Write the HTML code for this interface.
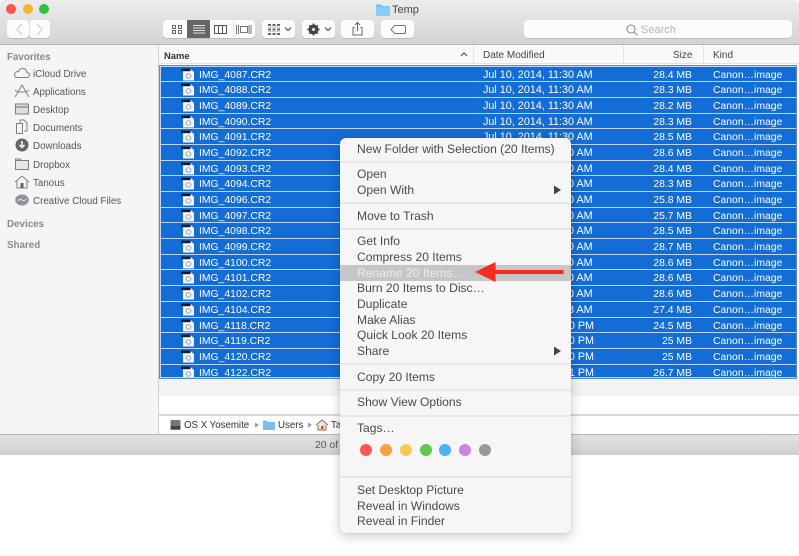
<!DOCTYPE html>
<html><head><meta charset="utf-8"><title>Temp</title>
<style>
html,body{margin:0;padding:0;background:#fff}
#p{position:relative;width:799px;height:556px;overflow:hidden;background:#fff;font-family:"Liberation Sans",sans-serif;font-size:10.5px;filter:blur(.35px)}
#p div,#p svg{position:absolute}
.t{white-space:nowrap;line-height:14px;height:14px}
.btn{background:#fcfcfc;border-radius:4px;box-shadow:0 1px 0 #bdbdbd;top:20px;height:18px}
.side{left:33px;color:#555;font-size:9.8px}
.head{left:7px;color:#8a8a8a;font-size:9.8px;font-weight:bold}
.r{left:161px;width:635px;height:15px;background:#146dd6}
.n,.d,.s,.k{color:#fff;top:1px;font-size:10.4px;line-height:15px;white-space:nowrap}
.n{left:38px}.d{left:322px;font-size:10.8px}.s{right:104px;text-align:right}.k{left:552px}
.ic{left:20px;top:1px;width:14px;height:14px}
.hd{color:#444;font-size:10px;top:49px}
.m{left:357px;color:#4a4a4a;font-size:12.1px;white-space:nowrap;line-height:14px;height:14px;margin-top:-1px}
.sep{left:340px;width:231px;height:2px;background:#e7e7e7}
.dot{width:12px;height:12px;border-radius:50%;top:444px}
</style></head><body><div id="p">
<svg width="0" height="0" style="position:absolute"><defs>
<symbol id="f" viewBox="0 0 14 14"><path d="M2 1h7.500l3.500 3v8.500h-11z" fill="#f4f6f9"/><rect x="0" y="0.600" width="9.500" height="2.600" fill="#0b1a2c"/><circle cx="7.500" cy="8" r="2.300" fill="none" stroke="#a7adb5" stroke-width="1.200"/></symbol>
</defs></svg>

<!-- window -->
<div style="left:0;top:0;width:799px;height:455px;background:#fff;border-radius:5px 5px 0 0;overflow:hidden">
  <div style="left:0;top:0;width:799px;height:45px;background:linear-gradient(#ececec,#d3d3d3);border-bottom:1px solid #b4b4b4;box-sizing:border-box"></div>
  <div style="left:0;top:45px;width:158px;height:390px;background:#f5f5f5"></div>
  <div style="left:158px;top:45px;width:1px;height:390px;background:#d2d2d2"></div>
  <div style="left:159px;top:45px;width:640px;height:19px;background:#f9f9f9;border-bottom:1px solid #e2e2e2;box-sizing:border-box"></div>
  <div style="left:473px;top:46px;width:1px;height:17px;background:#e2e2e2"></div>
  <div style="left:623px;top:46px;width:1px;height:17px;background:#e2e2e2"></div>
  <div style="left:703px;top:46px;width:1px;height:17px;background:#e2e2e2"></div>
  <div style="left:159px;top:379px;width:640px;height:17px;background:#f4f4f4"></div>
  <div style="left:159px;top:414px;width:640px;height:2px;background:#d8d8d8"></div>
  <div style="left:0;top:434px;width:799px;height:21px;background:linear-gradient(#e2e2e2,#cfcfcf);border-top:1px solid #b8b8b8;box-sizing:border-box"></div>
</div>

<!-- traffic lights -->
<div style="left:6px;top:4px;width:10px;height:10px;border-radius:50%;background:#f4564e"></div>
<div style="left:23px;top:4px;width:10px;height:10px;border-radius:50%;background:#f7b52e"></div>
<div style="left:39px;top:4px;width:10px;height:10px;border-radius:50%;background:#2fc140"></div>

<!-- title -->
<svg style="left:376px;top:3px" width="14" height="13" viewBox="0 0 14 13"><path d="M0 1.500h5l1 1.500h8v10h-14z" fill="#7cc0f2"/><rect y="4" width="14" height="9" fill="#8accf7"/></svg>
<div class="t" style="left:392px;top:3px;color:#444;font-size:11px">Temp</div>

<!-- toolbar -->
<div class="btn" style="left:7px;width:22px"></div>
<div class="btn" style="left:29px;width:21px;border-left:1px solid #e4e4e4;box-sizing:border-box"></div>
<svg style="left:13px;top:23px" width="34" height="13" viewBox="0 0 34 13" fill="none" stroke="#d2d2d2" stroke-width="1.300"><path d="M9 1l-5 5.500 5 5.500M24 1l5 5.500-5 5.500"/></svg>

<div class="btn" style="left:163px;width:92px"></div>
<div style="left:187px;top:20px;width:23px;height:18px;background:#666"></div>
<svg style="left:163px;top:20px" width="92" height="18" viewBox="0 0 92 18" fill="none" stroke="#555" stroke-width="1">
<path d="M9.500 5.500h3v3h-3zM15.500 5.500h3v3h-3zM9.500 10.500h3v3h-3zM15.500 10.500h3v3h-3z" stroke="#666"/>
<path d="M30 5.500h12M30 8h12M30 10.500h12M30 13h12" stroke="#e2e2e2"/>
<path d="M51.500 5.500h12v8h-12zM55.500 5.500v8M59.500 5.500v8"/>
<path d="M73.500 5v9M75.500 5v9M88 5v9M86 5v9M77.500 6.500h7v6h-7z" stroke="#777"/></svg>
<div style="left:233px;top:21px;width:1px;height:16px;background:#e2e2e2"></div>

<div class="btn" style="left:262px;width:33px"></div>
<svg style="left:262px;top:20px" width="33" height="18" viewBox="0 0 33 18" fill="none" stroke="#666" stroke-width="1"><path d="M6 5h12M6 9.500h12M6 14h12" stroke-width="2" stroke-dasharray="3 1.500"/><path d="M6 7.200h12M6 11.700h12" stroke="#bbb" stroke-width=".8"/><path d="M23 7.500l3 3 3-3" stroke="#555" stroke-width="1.200"/></svg>

<div class="btn" style="left:302px;width:33px"></div>
<svg style="left:302px;top:20px" width="33" height="18" viewBox="0 0 33 18"><circle cx="11.500" cy="9.500" r="3.800" fill="none" stroke="#444" stroke-width="2.400"/><path d="M11.500 3.500v12M5.500 9.500h12M7.300 5.300l8.400 8.400M15.700 5.300l-8.400 8.400" stroke="#444" stroke-width="1.700"/><circle cx="11.500" cy="9.500" r="1.400" fill="#fff"/><path d="M23 7.500l3 3 3-3" fill="none" stroke="#555" stroke-width="1.200"/></svg>

<div class="btn" style="left:341px;width:33px"></div>
<svg style="left:341px;top:20px" width="33" height="18" viewBox="0 0 33 18" fill="none" stroke="#666" stroke-width="1"><path d="M13.500 7.500h-1.500v7.500h9v-7.500h-1.500M16.500 11v-8.500M14 5l2.500-2.500 2.500 2.500"/></svg>

<div class="btn" style="left:381px;width:33px"></div>
<svg style="left:381px;top:20px" width="33" height="18" viewBox="0 0 33 18" fill="none" stroke="#777" stroke-width="1"><path d="M13.500 5.500h9.500q1.500 0 1.500 1.500v5q0 1.500-1.500 1.500h-9.500l-3.500-4z"/></svg>

<div class="btn" style="left:524px;width:268px"></div>
<svg style="left:625px;top:23px" width="14" height="14" viewBox="0 0 14 14" fill="none" stroke="#8e8e8e" stroke-width="1.100"><circle cx="6" cy="6" r="4"/><path d="M9 9l3.500 3.500"/></svg>
<div class="t" style="left:641px;top:23px;color:#b5b5b5;font-size:11px">Search</div>

<!-- sidebar -->
<div class="t head" style="top:51px">Favorites</div>
<div class="t side" style="top:68px">iCloud Drive</div>
<div class="t side" style="top:86px">Applications</div>
<div class="t side" style="top:104px">Desktop</div>
<div class="t side" style="top:122px">Documents</div>
<div class="t side" style="top:140px">Downloads</div>
<div class="t side" style="top:159px">Dropbox</div>
<div class="t side" style="top:177px">Tanous</div>
<div class="t side" style="top:195px">Creative Cloud Files</div>
<div class="t head" style="top:218px">Devices</div>
<div class="t head" style="top:239px">Shared</div>

<svg style="left:14px;top:65px" width="16" height="144" viewBox="0 0 16 144" fill="none" stroke="#808080" stroke-width="1">
<path d="M4 12.500h9q2.500-.500 2.500-2.500t-2.500-2.500q-.500-4-4.500-4-3 0-4 3-4 0-4 3.500 0 2.500 3.500 2.500z"/>
<path d="M1 32l7-12 7 12M4 27h8M1 25l3 2M15 25l-3 2"/>
<rect x="1.500" y="39" width="13" height="10" fill="#ddd"/><path d="M1.500 42h13" stroke="#666"/>
<g transform="translate(0 -2)"><path d="M2.500 60.500h6v10h-6zM6 60v-3h4l3 3v8h-3" fill="#f5f5f5"/></g>
<g transform="translate(0 -1)"><circle cx="8" cy="81" r="6.500" fill="#666" stroke="none"/><path d="M8 77v5M5.500 81l2.500 2.500 2.500-2.500" stroke="#fff" stroke-width="1.500"/></g>
<g transform="translate(0 -2)"><path d="M1.500 97.500v9h13v-9zM1.500 97.500v-1.500h5l1 1.500" fill="#e6e6e6"/></g>
<g transform="translate(0 -4)"><path d="M1 121l7-6 7 6M3 120v7h10v-7" /><rect x="6.500" y="122" width="3" height="5" fill="#666" stroke="none"/></g>
<g transform="translate(0 -2)"><ellipse cx="8" cy="137" rx="6.800" ry="5.500" fill="#8f9399" stroke="none"/><path d="M4 138q2-3 4-1t4-1" stroke="#dfe3e8"/></g>
</svg>

<!-- headers -->
<div class="t hd" style="left:164px;font-weight:bold;font-size:9.4px;color:#333">Name</div>
<svg style="left:460px;top:51px" width="8" height="6" viewBox="0 0 8 6" fill="none" stroke="#555" stroke-width="1.200"><path d="M1 5l3-3 3 3"/></svg>
<div class="t hd" style="left:483px">Date Modified</div>
<div class="t hd" style="left:673px">Size</div>
<div class="t hd" style="left:713px">Kind</div>

<!-- rubber band -->
<div style="left:159px;top:65px;width:638px;height:314px;background:#bcd5f2;outline:1px solid #4f8fdc;outline-offset:-1px"></div>

<!-- rows -->
<div class="r" style="top:67px;height:14px"><svg class="ic"><use href="#f"/></svg><div class="n">IMG_4087.CR2</div><div class="d">Jul 10, 2014, 11:30 AM</div><div class="s">28.4 MB</div><div class="k">Canon…image</div></div>
<div class="r" style="top:82px"><svg class="ic"><use href="#f"/></svg><div class="n">IMG_4088.CR2</div><div class="d">Jul 10, 2014, 11:30 AM</div><div class="s">28.3 MB</div><div class="k">Canon…image</div></div>
<div class="r" style="top:98px"><svg class="ic"><use href="#f"/></svg><div class="n">IMG_4089.CR2</div><div class="d">Jul 10, 2014, 11:30 AM</div><div class="s">28.2 MB</div><div class="k">Canon…image</div></div>
<div class="r" style="top:114px;height:14px"><svg class="ic"><use href="#f"/></svg><div class="n">IMG_4090.CR2</div><div class="d">Jul 10, 2014, 11:30 AM</div><div class="s">28.3 MB</div><div class="k">Canon…image</div></div>
<div class="r" style="top:129px"><svg class="ic"><use href="#f"/></svg><div class="n">IMG_4091.CR2</div><div class="d">Jul 10, 2014, 11:30 AM</div><div class="s">28.5 MB</div><div class="k">Canon…image</div></div>
<div class="r" style="top:145px"><svg class="ic"><use href="#f"/></svg><div class="n">IMG_4092.CR2</div><div class="d">Jul 10, 2014, 11:30 AM</div><div class="s">28.6 MB</div><div class="k">Canon…image</div></div>
<div class="r" style="top:161px;height:14px"><svg class="ic"><use href="#f"/></svg><div class="n">IMG_4093.CR2</div><div class="d">Jul 10, 2014, 11:30 AM</div><div class="s">28.4 MB</div><div class="k">Canon…image</div></div>
<div class="r" style="top:176px"><svg class="ic"><use href="#f"/></svg><div class="n">IMG_4094.CR2</div><div class="d">Jul 10, 2014, 11:30 AM</div><div class="s">28.3 MB</div><div class="k">Canon…image</div></div>
<div class="r" style="top:192px"><svg class="ic"><use href="#f"/></svg><div class="n">IMG_4096.CR2</div><div class="d">Jul 10, 2014, 11:30 AM</div><div class="s">25.8 MB</div><div class="k">Canon…image</div></div>
<div class="r" style="top:208px;height:14px"><svg class="ic"><use href="#f"/></svg><div class="n">IMG_4097.CR2</div><div class="d">Jul 10, 2014, 11:30 AM</div><div class="s">25.7 MB</div><div class="k">Canon…image</div></div>
<div class="r" style="top:223px"><svg class="ic"><use href="#f"/></svg><div class="n">IMG_4098.CR2</div><div class="d">Jul 10, 2014, 11:30 AM</div><div class="s">28.5 MB</div><div class="k">Canon…image</div></div>
<div class="r" style="top:239px"><svg class="ic"><use href="#f"/></svg><div class="n">IMG_4099.CR2</div><div class="d">Jul 10, 2014, 11:30 AM</div><div class="s">28.7 MB</div><div class="k">Canon…image</div></div>
<div class="r" style="top:255px;height:14px"><svg class="ic"><use href="#f"/></svg><div class="n">IMG_4100.CR2</div><div class="d">Jul 10, 2014, 11:30 AM</div><div class="s">28.6 MB</div><div class="k">Canon…image</div></div>
<div class="r" style="top:270px"><svg class="ic"><use href="#f"/></svg><div class="n">IMG_4101.CR2</div><div class="d">Jul 10, 2014, 11:30 AM</div><div class="s">28.6 MB</div><div class="k">Canon…image</div></div>
<div class="r" style="top:286px"><svg class="ic"><use href="#f"/></svg><div class="n">IMG_4102.CR2</div><div class="d">Jul 10, 2014, 11:30 AM</div><div class="s">28.6 MB</div><div class="k">Canon…image</div></div>
<div class="r" style="top:302px"><svg class="ic"><use href="#f"/></svg><div class="n">IMG_4104.CR2</div><div class="d">Jul 10, 2014, 11:38 AM</div><div class="s">27.4 MB</div><div class="k">Canon…image</div></div>
<div class="r" style="top:318px;height:14px"><svg class="ic"><use href="#f"/></svg><div class="n">IMG_4118.CR2</div><div class="d">Jul 10, 2014, 12:30 PM</div><div class="s">24.5 MB</div><div class="k">Canon…image</div></div>
<div class="r" style="top:333px"><svg class="ic"><use href="#f"/></svg><div class="n">IMG_4119.CR2</div><div class="d">Jul 10, 2014, 12:30 PM</div><div class="s">25 MB</div><div class="k">Canon…image</div></div>
<div class="r" style="top:349px"><svg class="ic"><use href="#f"/></svg><div class="n">IMG_4120.CR2</div><div class="d">Jul 10, 2014, 12:30 PM</div><div class="s">25 MB</div><div class="k">Canon…image</div></div>
<div class="r" style="top:365px;height:12px;overflow:hidden"><svg class="ic"><use href="#f"/></svg><div class="n">IMG_4122.CR2</div><div class="d">Jul 10, 2014, 12:31 PM</div><div class="s">26.7 MB</div><div class="k">Canon…image</div></div>

<!-- path bar -->
<svg style="left:169px;top:418px" width="160" height="14" viewBox="0 0 160 14"><rect x="1.500" y="2" width="10" height="10" rx="1" fill="#777"/><rect x="1.500" y="8" width="10" height="3" fill="#444"/><path d="M86 4.500l4 2.500-4 2.500zM139 4.500l4 2.500-4 2.500z" fill="#999"/><path d="M94 2.500h4l1 1.500h7v8h-12z" fill="#7cbcec"/><path d="M147 7l6-5 6 5M149 7v5h8v-5" fill="#f0e6da" stroke="#8a6a55"/><rect x="152" y="8" width="2.500" height="3" fill="#d8502f"/></svg>
<div class="t" style="left:184px;top:419px;color:#333;font-size:9.7px">OS X Yosemite</div>
<div class="t" style="left:278px;top:419px;color:#333;font-size:9.7px">Users</div>
<div class="t" style="left:331px;top:419px;color:#333;font-size:9.7px">Tanous</div>
<div class="t" style="left:315px;top:439px;color:#555;font-size:10.4px">20 of 20 selected</div>

<!-- menu -->
<div style="left:340px;top:138px;width:231px;height:395px;background:#f6f6f6;border-radius:6px;box-shadow:0 3px 12px rgba(0,0,0,.22),0 0 1px rgba(0,0,0,.2)"></div>
<div style="left:340px;top:265px;width:231px;height:16px;background:#c6c6c6"></div>
<div class="sep" style="top:161px"></div>
<div class="sep" style="top:202px"></div>
<div class="sep" style="top:228px"></div>
<div class="sep" style="top:363px"></div>
<div class="sep" style="top:389px"></div>
<div class="sep" style="top:415px"></div>
<div class="sep" style="top:476px"></div>

<div class="m" style="top:143px">New Folder with Selection (20 Items)</div>
<div class="m" style="top:168px">Open</div>
<div class="m" style="top:184px">Open With</div>
<div class="m" style="top:210px">Move to Trash</div>
<div class="m" style="top:235px">Get Info</div>
<div class="m" style="top:251px">Compress 20 Items</div>
<div class="m" style="top:267px;color:#ececec">Rename 20 Items…</div>
<div class="m" style="top:282px">Burn 20 Items to Disc…</div>
<div class="m" style="top:298px">Duplicate</div>
<div class="m" style="top:314px">Make Alias</div>
<div class="m" style="top:329px">Quick Look 20 Items</div>
<div class="m" style="top:345px">Share</div>
<div class="m" style="top:371px">Copy 20 Items</div>
<div class="m" style="top:396px">Show View Options</div>
<div class="m" style="top:422px">Tags…</div>
<div class="m" style="top:484px">Set Desktop Picture</div>
<div class="m" style="top:500px">Reveal in Windows</div>
<div class="m" style="top:515px">Reveal in Finder</div>

<svg style="left:553px;top:185px" width="9" height="172" viewBox="0 0 9 172" fill="#444"><path d="M1 0.500l7 4.500-7 4.500zM1 161.500l7 4.500-7 4.500z"/></svg>

<div class="dot" style="left:360px;background:#fb5757"></div>
<div class="dot" style="left:380px;background:#f6a244"></div>
<div class="dot" style="left:400px;background:#f6ca51"></div>
<div class="dot" style="left:419.500px;background:#62c655"></div>
<div class="dot" style="left:439px;background:#4ab2f5"></div>
<div class="dot" style="left:459px;background:#cd84e0"></div>
<div class="dot" style="left:479px;background:#999"></div>

<!-- arrow -->
<svg style="left:470px;top:258px" width="100" height="28" viewBox="0 0 100 28"><path d="M5 14L25.500 4v8h68v4h-68v8z" fill="#f62c20"/></svg>
</div></body></html>
